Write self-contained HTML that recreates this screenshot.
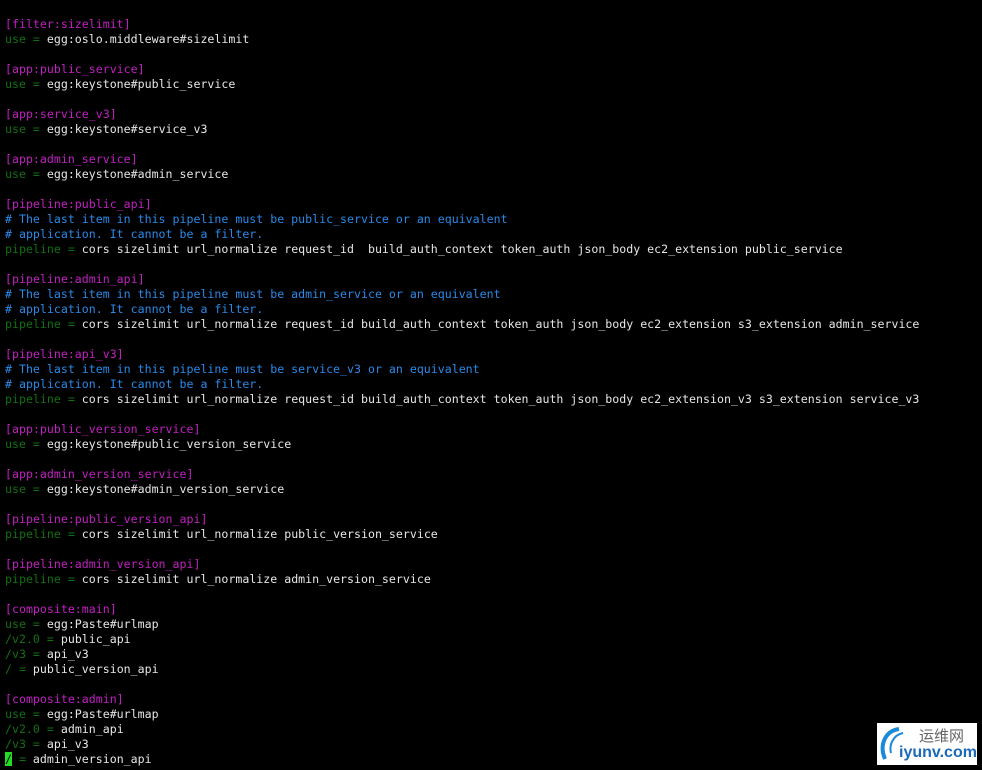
<!DOCTYPE html>
<html><head><meta charset="utf-8"><style>
html,body{margin:0;padding:0;background:#000;width:982px;height:770px;overflow:hidden}
pre{margin:0;position:absolute;left:5px;top:17px;font-family:"DejaVu Sans Mono","Liberation Mono",monospace;font-size:11.6px;line-height:15px;color:#e6e6e6}
.s{color:#c020c0}.k{color:#107010}.c{color:#2a8ae8}
.cur{background:#22dd22;color:#000}
.logo{position:absolute;left:877px;top:723px;width:100px;height:42px;background:#fff;font-family:"Liberation Sans","Noto Sans CJK SC",sans-serif}
</style></head><body>
<pre><span class="s">[filter:sizelimit]</span>
<span class="k">use =</span> egg:oslo.middleware#sizelimit

<span class="s">[app:public_service]</span>
<span class="k">use =</span> egg:keystone#public_service

<span class="s">[app:service_v3]</span>
<span class="k">use =</span> egg:keystone#service_v3

<span class="s">[app:admin_service]</span>
<span class="k">use =</span> egg:keystone#admin_service

<span class="s">[pipeline:public_api]</span>
<span class="c"># The last item in this pipeline must be public_service or an equivalent</span>
<span class="c"># application. It cannot be a filter.</span>
<span class="k">pipeline =</span> cors sizelimit url_normalize request_id  build_auth_context token_auth json_body ec2_extension public_service

<span class="s">[pipeline:admin_api]</span>
<span class="c"># The last item in this pipeline must be admin_service or an equivalent</span>
<span class="c"># application. It cannot be a filter.</span>
<span class="k">pipeline =</span> cors sizelimit url_normalize request_id build_auth_context token_auth json_body ec2_extension s3_extension admin_service

<span class="s">[pipeline:api_v3]</span>
<span class="c"># The last item in this pipeline must be service_v3 or an equivalent</span>
<span class="c"># application. It cannot be a filter.</span>
<span class="k">pipeline =</span> cors sizelimit url_normalize request_id build_auth_context token_auth json_body ec2_extension_v3 s3_extension service_v3

<span class="s">[app:public_version_service]</span>
<span class="k">use =</span> egg:keystone#public_version_service

<span class="s">[app:admin_version_service]</span>
<span class="k">use =</span> egg:keystone#admin_version_service

<span class="s">[pipeline:public_version_api]</span>
<span class="k">pipeline =</span> cors sizelimit url_normalize public_version_service

<span class="s">[pipeline:admin_version_api]</span>
<span class="k">pipeline =</span> cors sizelimit url_normalize admin_version_service

<span class="s">[composite:main]</span>
<span class="k">use =</span> egg:Paste#urlmap
<span class="k">/v2.0 =</span> public_api
<span class="k">/v3 =</span> api_v3
<span class="k">/ =</span> public_version_api

<span class="s">[composite:admin]</span>
<span class="k">use =</span> egg:Paste#urlmap
<span class="k">/v2.0 =</span> admin_api
<span class="k">/v3 =</span> api_v3
<span class="cur">/</span><span class="k"> =</span> admin_version_api</pre>
<div class="logo">
<svg width="40" height="42" style="position:absolute;left:0;top:0"><path d="M22 6 C8 8 2 22 8 36" stroke="#1a8ad8" stroke-width="4" fill="none"/><path d="M26 10 C16 12 12 22 14 30" stroke="#1a8ad8" stroke-width="2" fill="none"/></svg>
<div style="position:absolute;left:42px;top:2px;font-size:15px;color:#666">运维网</div>
<div style="position:absolute;left:22px;top:21px;font-size:16px;font-weight:bold;color:#1a6ab8">iyunv.com</div>
</div>
</body></html>
